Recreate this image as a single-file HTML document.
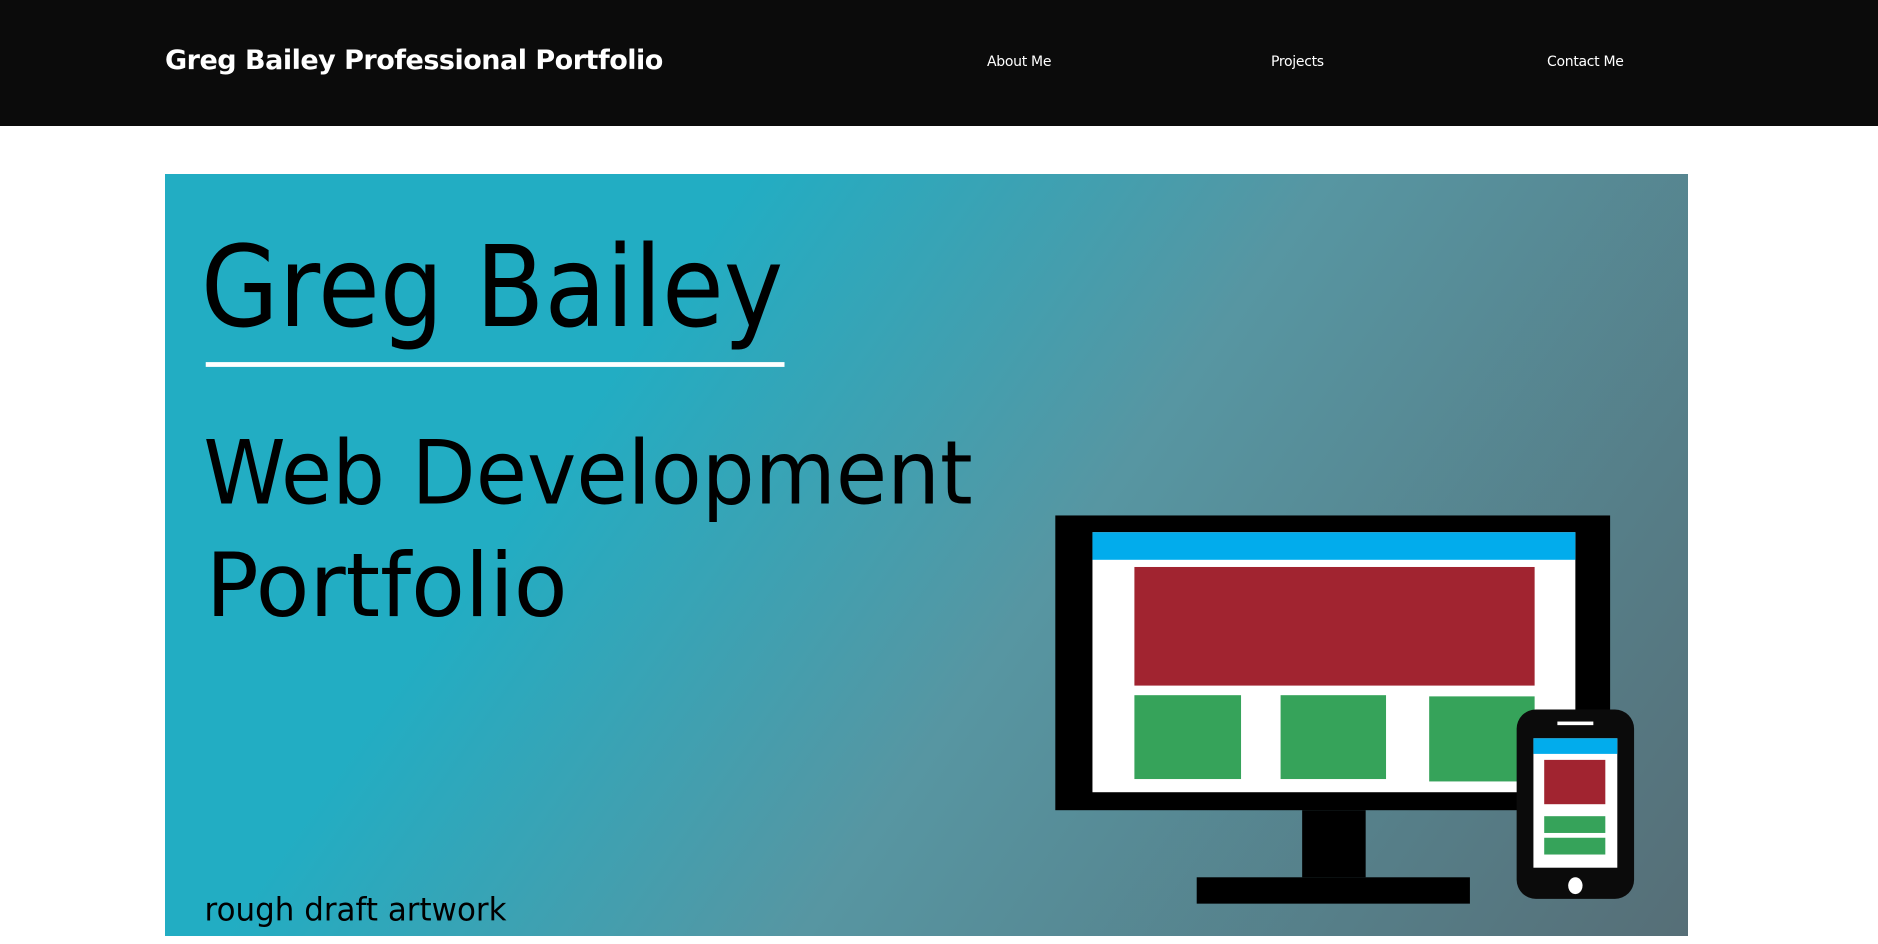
<!DOCTYPE html>
<html><head><meta charset="utf-8"><style>
html,body{margin:0;padding:0;background:#fff;width:1878px;height:944px;overflow:hidden}
header{position:absolute;left:0;top:0;width:1878px;height:126px;background:#0b0b0b;color:#fff;font-family:"DejaVu Sans","Liberation Sans",sans-serif}
.t{position:absolute;left:165px;top:45px;font-size:27px;font-weight:bold;letter-spacing:-0.5px;white-space:nowrap}
.n{position:absolute;top:54px;font-size:14px;letter-spacing:-0.3px;white-space:nowrap}
svg{position:absolute;left:165px;top:174px}
</style></head><body>
<header>
<div class="t">Greg Bailey Professional Portfolio</div>
<div class="n" style="left:987px">About Me</div>
<div class="n" style="left:1271px">Projects</div>
<div class="n" style="left:1547px">Contact Me</div>
</header>
<svg width="1523" height="762" viewBox="138 145 1271 636" preserveAspectRatio="none">
<defs><linearGradient id="g" gradientUnits="userSpaceOnUse" x1="250" y1="145" x2="1409" y2="950">
<stop offset="0" stop-color="#22adc3"/><stop offset="0.22" stop-color="#22adc3"/><stop offset="0.5" stop-color="#5796a2"/><stop offset="1" stop-color="#566870"/></linearGradient></defs>
<rect x="138" y="145" width="1271" height="636" fill="url(#g)"/>
<g font-family="DejaVu Sans,Liberation Sans,sans-serif" fill="#000">
<text x="168" y="272" font-size="94" textLength="486" lengthAdjust="spacingAndGlyphs">Greg Bailey</text>
<text x="170" y="420" font-size="74" textLength="642" lengthAdjust="spacingAndGlyphs">Web Development</text>
<text x="172" y="514" font-size="74" textLength="302" lengthAdjust="spacingAndGlyphs">Portfolio</text>
<text x="171" y="768" font-size="27" textLength="252" lengthAdjust="spacingAndGlyphs">rough draft artwork</text>
</g>
<rect x="172" y="302" width="483" height="4" fill="#fff"/>
<rect x="881" y="430" width="463" height="246" fill="#000"/>
<rect x="912" y="444" width="403" height="217" fill="#fff"/>
<rect x="912" y="444" width="403" height="23" fill="#02acec"/>
<rect x="947" y="473" width="334" height="99" fill="#a12430"/>
<rect x="947" y="580" width="89" height="70" fill="#36a35a"/>
<rect x="1069" y="580" width="88" height="70" fill="#36a35a"/>
<rect x="1193" y="581" width="88" height="71" fill="#36a35a"/>
<rect x="1087" y="676" width="53" height="56" fill="#000"/>
<rect x="999" y="732" width="228" height="22" fill="#000"/>
<rect x="1266" y="592" width="98" height="158" rx="16" fill="#0b0b0b"/>
<rect x="1280" y="616" width="70" height="108" fill="#fff"/>
<rect x="1280" y="616" width="70" height="13" fill="#02acec"/>
<rect x="1289" y="634" width="51" height="37" fill="#a12430"/>
<rect x="1289" y="681" width="51" height="14" fill="#36a35a"/>
<rect x="1289" y="699" width="51" height="14" fill="#36a35a"/>
<rect x="1300" y="602" width="30" height="3" fill="#fff"/>
<ellipse cx="1315" cy="739" rx="6" ry="7" fill="#fff"/>
</svg>
</body></html>
